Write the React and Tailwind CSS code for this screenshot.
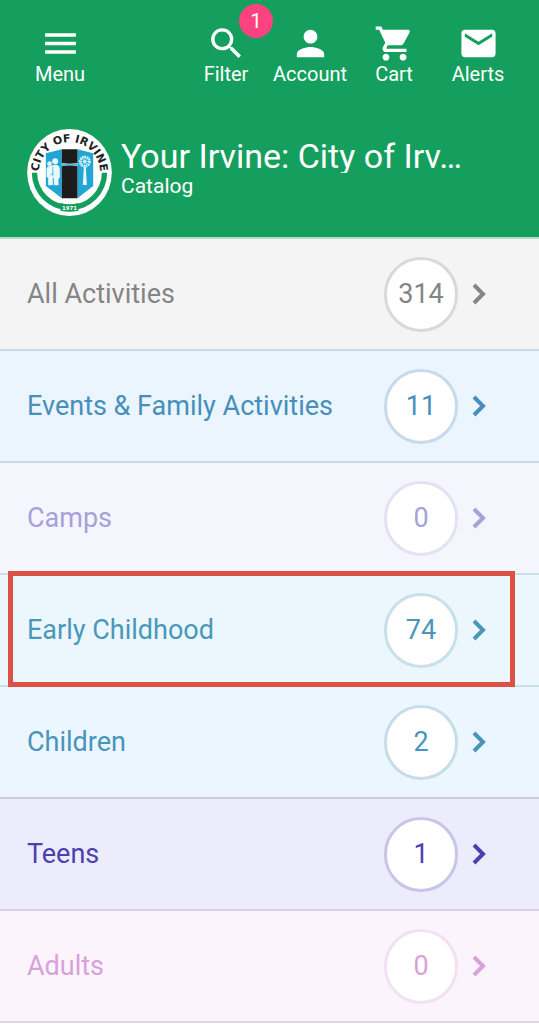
import { MdEmail, MdMenu, MdPerson, MdSearch, MdShoppingCart } from 'react-icons/md';

const CATEGORIES = [
  {
    label: 'All Activities',
    count: 314,
    row: 'border-[#cbd9e5] bg-[#f4f4f4] text-[#858585]',
    ring: 'border-[#d9d9d9]'
  },
  {
    label: 'Events & Family Activities',
    count: 11,
    row: 'border-[#ccd8ea] bg-[#ebf5fd] text-[#468fbc]',
    ring: 'border-[#c8daea]'
  },
  {
    label: 'Camps',
    count: 0,
    row: 'border-[#cbdfe8] bg-[#f5f5fe] text-[#a6a1d8]',
    ring: 'border-[#e3e2f3]'
  },
  {
    label: 'Early Childhood',
    count: 74,
    row: 'border-[#cbdfe8] bg-[#ebf7fc] text-[#4997bb]',
    ring: 'border-[#c9dfe9]',
    highlighted: true
  },
  {
    label: 'Children',
    count: 2,
    row: 'border-[#c9cce3] bg-[#ecf6fe] text-[#4795bb]',
    ring: 'border-[#c8dde7]'
  },
  {
    label: 'Teens',
    count: 1,
    row: 'border-[#d8cee6] bg-[#edecfc] text-[#4b40b0]',
    ring: 'border-[#c9c5e8]'
  },
  {
    label: 'Adults',
    count: 0,
    row: 'border-[#e4d3ea] bg-[#fbf4fd] text-[#d7a2d7]',
    ring: 'border-[#f3e1f3]'
  }
];

const ACTIONS = [
  { label: 'Filter', icon: MdSearch, badge: 1 },
  { label: 'Account', icon: MdPerson },
  { label: 'Cart', icon: MdShoppingCart },
  { label: 'Alerts', icon: MdEmail }
];

function NavButton({ label, icon: Icon, badge }) {
  return (
    <button type="button" className="relative flex w-[84px] flex-col items-center text-[20px] leading-5">
      <Icon size={41} aria-hidden="true" />
      {label}
      {badge && (
        <span className="absolute -top-[19px] -right-[5px] flex size-[34px] items-center justify-center rounded-full bg-[#fd437f]">
          {badge}
        </span>
      )}
    </button>
  );
}

// City seal: lettering on the upper arc, green band below, shield in the middle.
function CitySeal() {
  return (
    <svg className="h-[87px] w-[85px] shrink-0" viewBox="0 0 254 261" role="img" aria-label="City of Irvine seal">
      <defs>
        <path id="seal-arc" d="M34 140L35 131a92 92 0 0 1 184 0L220 140" />
      </defs>
      <ellipse cx="127" cy="130.5" rx="127" ry="130.5" fill="#fff" />
      <path d="M14 131h16a97 97 0 0 0 194 0h16a113 113 0 0 1-226 0z" fill="#139e5d" />
      <path d="M100 222q27 8 54 0v23q-27 6-54 0z" fill="#139e5d" />
      <text
        x="127"
        y="243"
        textAnchor="middle"
        fontFamily="DejaVu Sans, sans-serif"
        fontWeight="700"
        fontSize="16"
        fill="#fff"
      >
        1971
      </text>
      <text fontFamily="DejaVu Sans, sans-serif" fontWeight="700" fontSize="33" fill="#222">
        <textPath href="#seal-arc" startOffset="50%" textAnchor="middle">
          CITY OF IRVINE
        </textPath>
      </text>
      <path d="M56 73l48-12v147l-48-37z" fill="#20a5d5" />
      <path d="M151 61l47 12v98l-47 37z" fill="#20a5d5" />
      <path d="M104 61h47v41q-24 5-47 0z" fill="#1c1c1c" />
      <path d="M104 112q23-6 47 0v96h-47z" fill="#1c1c1c" />
      <path d="M104 103q23 5 47 0v8q-24-5-47 1z" fill="#4db8dc" />
      <g fill="#e9f8fc">
        <circle cx="84" cy="97" r="9" />
        <circle cx="67" cy="104" r="7" />
        <circle cx="73" cy="127" r="6" />
        <path d="M58 120q2-9 11-9l8-2q20-6 21 13v24l-4 3v20H80v-22h-3v22H63v-22l-5-4z" />
        <path d="M170 114h6l3 54h-12z" />
      </g>
      <g stroke="#20a5d5" strokeWidth="2">
        <path d="M77 114v28M70 138l9-6" />
      </g>
      <g fill="none" stroke="#d5f1f9">
        <circle cx="173" cy="98" r="14" strokeWidth="8" strokeDasharray="5 2" />
        <circle cx="173" cy="98" r="4" strokeWidth="3" />
        <path d="M173 80v36M155 98h36M160 85l26 26M186 85l-26 26" strokeWidth="2" />
      </g>
    </svg>
  );
}

function Chevron() {
  return (
    <svg
      className="size-10 shrink-0"
      viewBox="0 0 40 40"
      fill="none"
      stroke="currentColor"
      strokeWidth="4"
      strokeLinejoin="miter"
      aria-hidden="true"
    >
      <path d="M16 11l9 9-9 9" />
    </svg>
  );
}

function CategoryRow({ label, count, row, ring, highlighted }) {
  return (
    <li className="relative">
      <a
        href="#"
        className={`flex h-28 items-center border-b-2 pr-[41px] pl-[27px] text-[27px] leading-8 ${row}`}
      >
        <span className="min-w-0 flex-1 truncate">{label}</span>
        <span
          className={`flex h-[75px] w-[74px] shrink-0 items-center justify-center rounded-full border-3 bg-white ${ring}`}
        >
          {count}
        </span>
        <Chevron />
      </a>
      {highlighted && (
        <span className="pointer-events-none absolute -top-1 right-6 bottom-0 left-2 z-10 border-5 border-[#dd5046]" />
      )}
    </li>
  );
}

export default function App() {
  return (
    <div className="w-full bg-white font-[Roboto,sans-serif]">
      <header className="border-b-2 border-[#b5dcc8] bg-[#149f5e] pt-[23px] pb-[21px] text-white">
        <nav className="flex justify-between pr-[19px] pl-[18px]" aria-label="Main">
          <NavButton label="Menu" icon={MdMenu} />
          <div className="flex">
            {ACTIONS.map((action) => (
              <NavButton key={action.label} {...action} />
            ))}
          </div>
        </nav>
        <div className="mt-[45px] flex items-start gap-[9px] pr-10 pl-[27px]">
          <CitySeal />
          <div className="min-w-0 pt-[10px]">
            <h1 className="truncate text-[34px] leading-none">Your Irvine: City of Irv…</h1>
            <p className="text-[21px] leading-[26px]">Catalog</p>
          </div>
        </div>
      </header>
      <main>
        <ul>
          {CATEGORIES.map((category) => (
            <CategoryRow key={category.label} {...category} />
          ))}
        </ul>
      </main>
    </div>
  );
}
